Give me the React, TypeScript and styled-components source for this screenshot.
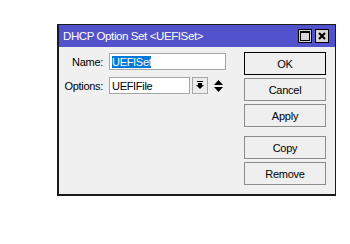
import styled, { createGlobalStyle } from "styled-components";

const GlobalStyle = createGlobalStyle`
  html, body {
    margin: 0;
    padding: 0;
    background: #ffffff;
  }
  body {
    font-family: "Liberation Sans", Arial, sans-serif;
    font-size: 11px;
    letter-spacing: -0.3px;
    color: #000;
  }
`;

const fields = [
  { label: "Name:", value: "UEFISet", selected: true, wide: true },
  { label: "Options:", value: "UEFIFile", selected: false, wide: false },
];

export default function App() {
  return (
    <>
      <GlobalStyle />
      <Window>
        <TitleBar>
          <Title>DHCP Option Set &lt;UEFISet&gt;</Title>
          <TitleButtons>
            <TitleButton aria-label="maximize">
              <svg width="10" height="10" viewBox="0 0 10 10">
                <rect x="0.5" y="0.5" width="9" height="9" fill="none" stroke="#000" />
                <rect x="0" y="0" width="10" height="2" fill="#000" />
              </svg>
            </TitleButton>
            <TitleButton aria-label="close">
              <svg width="8" height="8" viewBox="0 0 8 8">
                <path d="M1 1 L7 7 M7 1 L1 7" stroke="#000" strokeWidth="2" />
              </svg>
            </TitleButton>
          </TitleButtons>
        </TitleBar>
        <Body>
          <Form>
            {fields.map((f) => (
              <Row key={f.label}>
                <Label>{f.label}</Label>
                <Controls>
                  <Input $wide={f.wide}>
                    {f.selected ? <Selected>{f.value}</Selected> : f.value}
                  </Input>
                  {!f.wide && (
                    <>
                      <DropButton>
                        <svg width="8" height="9" viewBox="0 0 8 9">
                          <rect x="1" y="0" width="6" height="1" fill="#000" />
                          <path d="M2 2 H6 V4 H8 L4 8 L0 4 H2 Z" fill="#000" />
                        </svg>
                      </DropButton>
                      <Spinner>
                        <svg width="9" height="12" viewBox="0 0 9 12">
                          <path d="M4.5 0 L9 5 H0 Z" fill="#000" />
                          <path d="M0 7 H9 L4.5 12 Z" fill="#000" />
                        </svg>
                      </Spinner>
                    </>
                  )}
                </Controls>
              </Row>
            ))}
          </Form>
          <Buttons>
            <Button $default>OK</Button>
            <Button>Cancel</Button>
            <Button>Apply</Button>
            <Spacer />
            <Button>Copy</Button>
            <Button>Remove</Button>
          </Buttons>
        </Body>
      </Window>
    </>
  );
}

const Window = styled.div`
  margin: 24px 0 0 57px;
  width: 276px;
  height: 169px;
  border: 1px solid #1a1a1a;
  border-left-width: 2px;
  border-bottom-width: 2px;
  background: #f0f0f0;
  display: flex;
  flex-direction: column;
`;

const TitleBar = styled.div`
  height: 22px;
  background: #5252cc;
  display: flex;
  align-items: center;
  justify-content: space-between;
  padding: 0 6px 0 4px;
`;

const Title = styled.span`
  color: #fff;
  font-size: 11.5px;
  letter-spacing: -0.4px;
`;

const TitleButtons = styled.div`
  display: flex;
  gap: 3px;
`;

const TitleButton = styled.div`
  width: 14px;
  height: 14px;
  box-sizing: border-box;
  border: 1px solid #000;
  background: #d6d6d6;
  display: flex;
  align-items: center;
  justify-content: center;
`;

const Body = styled.div`
  flex: 1;
  display: flex;
  justify-content: space-between;
  padding: 5px 9px 0 0;
`;

const Form = styled.div`
  display: flex;
  flex-direction: column;
  gap: 7px;
  padding-top: 1px;
`;

const Row = styled.div`
  display: flex;
  align-items: center;
`;

const Label = styled.span`
  width: 44px;
  text-align: right;
  margin-right: 6px;
`;

const Controls = styled.div`
  display: flex;
  align-items: center;
`;

const Input = styled.div<{ $wide?: boolean }>`
  width: ${(p) => (p.$wide ? "117px" : "81px")};
  height: 17px;
  box-sizing: border-box;
  border: 1px solid #a5a5a5;
  background: #fff;
  padding: 0 2px;
  display: flex;
  align-items: center;
`;

const Selected = styled.span`
  background: #0078d7;
  color: #fff;
`;

const DropButton = styled.div`
  width: 16px;
  height: 17px;
  box-sizing: border-box;
  margin-left: 2px;
  border: 1px solid #a5a5a5;
  background: #ececec;
  display: flex;
  align-items: center;
  justify-content: center;
`;

const Spinner = styled.div`
  margin-left: 6px;
  display: flex;
  align-items: center;
`;

const Buttons = styled.div`
  display: flex;
  flex-direction: column;
  gap: 3px;
`;

const Button = styled.div<{ $default?: boolean }>`
  width: 82px;
  height: 23px;
  box-sizing: border-box;
  border: 1px solid ${(p) => (p.$default ? "#000" : "#8c8c8c")};
  background: #efefef;
  display: flex;
  align-items: center;
  justify-content: center;
  letter-spacing: -0.25px;
`;

const Spacer = styled.div`
  height: 3px;
`;
